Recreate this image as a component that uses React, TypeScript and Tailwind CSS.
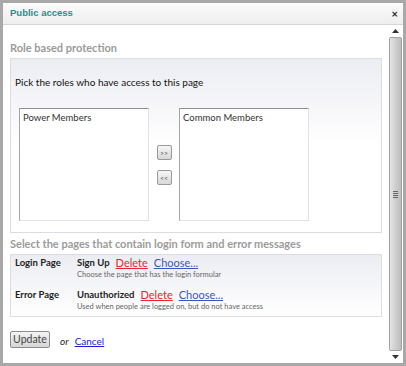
import React from 'react';

const font = { fontFamily: 'Lato, "Open Sans", sans-serif' };

const ListBox: React.FC<{ label: string }> = ({ label }) => (
  <div className="w-[130px] h-[113px] bg-white border border-[#e2e2e2] border-t-[#8f8f8f] border-l-[#a5a5a5] px-[3px] pt-[2px] text-[9.5px] text-[#333] leading-[14px]">
    {label}
  </div>
);

const MoveButton: React.FC<{ label: string }> = ({ label }) => (
  <button className="w-[15px] h-[15px] rounded-[2px] border border-[#9a9a9a] bg-gradient-to-b from-[#f6f6f6] to-[#d8d8d8] text-[7px] leading-[12px] text-[#555] flex items-center justify-center">
    {label}
  </button>
);

const PageRow: React.FC<{ label: string; page: string; hint: string }> = ({ label, page, hint }) => (
  <div className="flex">
    <div className="w-[62px] text-[9.5px] font-bold text-[#222] leading-[14px]">{label}</div>
    <div className="flex flex-col">
      <div className="flex items-center gap-[6px] text-[11px] leading-[14px]">
        <span className="text-[9.5px] font-bold text-[#222]">{page}</span>
        <a className="text-[#e8262b] underline">Delete</a>
        <a className="text-[#3b55c0] underline">Choose...</a>
      </div>
      <div className="text-[7.5px] text-[#666] leading-[10px]">{hint}</div>
    </div>
  </div>
);

export default function App() {
  return (
    <div className="w-[406px] h-[366px] bg-[#a8a8a8] p-[3px]" style={font}>
      <div className="flex flex-col h-full bg-white">
        {/* Title bar */}
        <div className="h-[22px] flex items-center justify-between px-[7px] bg-gradient-to-b from-[#fbfbfb] to-[#eeeeee] border-b border-[#d6d6d6]">
          <span className="text-[9.5px] font-bold text-[#2f8a8a]" style={{ fontFamily: '"Liberation Sans", Arial, sans-serif' }}>
            Public access
          </span>
          <span className="text-[11px] font-bold text-[#222] leading-none mr-[-2px]">×</span>
        </div>

        <div className="flex flex-1 min-h-0">
          {/* Content */}
          <div className="flex-1 pl-[7px] pr-[6px] pt-[15px]">
            <h2 className="text-[11px] font-bold text-[#9b9b9b] leading-[16px]">Role based protection</h2>
            <div className="mt-[2px] h-[175px] border border-[#dcdce2] bg-gradient-to-b from-[#ecedf3] via-white to-white px-[4px]">
              <p className="mt-[16px] text-[10px] text-[#111] leading-[14px]">
                Pick the roles who have access to this page
              </p>
              <div className="mt-[19px] ml-[4px] flex">
                <ListBox label="Power Members" />
                <div className="w-[30px] flex flex-col items-center pt-[37px] gap-[10px]">
                  <MoveButton label=">>" />
                  <MoveButton label="<<" />
                </div>
                <ListBox label="Common Members" />
              </div>
            </div>

            <h2 className="mt-[3px] text-[11px] font-bold text-[#9b9b9b] leading-[16px]">
              Select the pages that contain login form and error messages
            </h2>
            <div className="mt-[2px] h-[63px] border border-[#dcdce2] bg-gradient-to-b from-[#ecedf3] to-white px-[4px] pt-[1px] flex flex-col gap-[8px]">
              <PageRow label="Login Page" page="Sign Up" hint="Choose the page that has the login formular" />
              <PageRow label="Error Page" page="Unauthorized" hint="Used when people are logged on, but do not have access" />
            </div>

            <div className="mt-[13px] flex items-center">
              <button className="w-[40px] h-[17px] rounded-[2px] border border-[#8c8c8c] bg-gradient-to-b from-[#f4f4f4] to-[#d6d6d6] text-[10.5px] text-[#444] leading-none">
                Update
              </button>
              <span className="ml-[10px] mt-[4px] text-[10px] italic text-[#222]">or</span>
              <a className="ml-[6px] mt-[4px] text-[10px] text-[#1a1ae0] underline">Cancel</a>
            </div>
          </div>

          {/* Scrollbar */}
          <div className="w-[15px] flex flex-col bg-white">
            <div className="h-[12px] flex items-center justify-center text-[#444]">
              <svg width="7" height="4" viewBox="0 0 7 4"><path d="M0 4 L3.5 0 L7 4 Z" fill="#333" /></svg>
            </div>
            <div className="flex-1 mx-[1px] rounded-[2px] border border-[#a0a0a0] bg-gradient-to-r from-[#e4e4e4] via-[#cfcfcf] to-[#bdbdbd] flex items-center justify-center">
              <div className="flex flex-col gap-[1px]">
                <div className="w-[5px] h-px bg-[#666]" />
                <div className="w-[5px] h-px bg-[#666]" />
                <div className="w-[5px] h-px bg-[#666]" />
                <div className="w-[5px] h-px bg-[#666]" />
              </div>
            </div>
            <div className="h-[12px] flex items-center justify-center">
              <svg width="7" height="4" viewBox="0 0 7 4"><path d="M0 0 L7 0 L3.5 4 Z" fill="#333" /></svg>
            </div>
          </div>
        </div>
      </div>
    </div>
  );
}
